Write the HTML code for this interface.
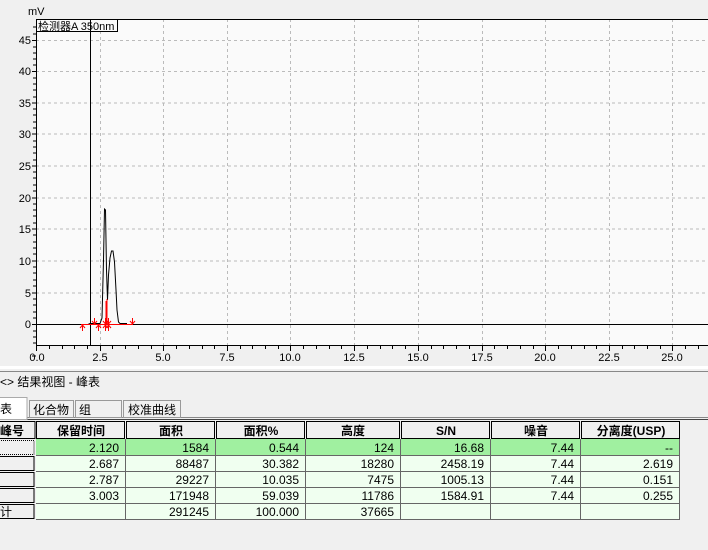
<!DOCTYPE html>
<html><head><meta charset="utf-8"><style>
html,body{margin:0;padding:0;background:#f0f0f0;width:708px;height:550px;overflow:hidden}
svg text{font-family:"Liberation Sans","Noto Sans CJK SC",sans-serif}
.m{font-family:"Liberation Mono","Noto Sans CJK SC",monospace;font-size:12px}
</style></head><body>
<svg width="708" height="550" xmlns="http://www.w3.org/2000/svg">
<rect x="0" y="0" width="708" height="550" fill="#f0f0f0"/>
<rect x="36" y="19" width="672" height="326" fill="#fafafa"/>
<g stroke="#bbb" stroke-dasharray="3,3" stroke-width="1">
<line x1="36" x2="708" y1="40.5" y2="40.5"/><line x1="36" x2="708" y1="71.5" y2="71.5"/>
<line x1="36" x2="708" y1="103" y2="103"/><line x1="36" x2="708" y1="134" y2="134"/>
<line x1="36" x2="708" y1="166" y2="166"/><line x1="36" x2="708" y1="198" y2="198"/>
<line x1="36" x2="708" y1="229" y2="229"/><line x1="36" x2="708" y1="261" y2="261"/>
<line x1="36" x2="708" y1="293" y2="293"/>
<line y1="19" y2="345" x1="100.5" x2="100.5"/><line y1="19" y2="345" x1="163.5" x2="163.5"/>
<line y1="19" y2="345" x1="227.5" x2="227.5"/><line y1="19" y2="345" x1="290.5" x2="290.5"/>
<line y1="19" y2="345" x1="354.5" x2="354.5"/><line y1="19" y2="345" x1="418.5" x2="418.5"/>
<line y1="19" y2="345" x1="482.5" x2="482.5"/><line y1="19" y2="345" x1="545.5" x2="545.5"/>
<line y1="19" y2="345" x1="609.5" x2="609.5"/><line y1="19" y2="345" x1="672.5" x2="672.5"/>
</g>
<g stroke="#000" stroke-width="1" fill="none">
<line x1="36" x2="708" y1="19.5" y2="19.5"/>
<line x1="36" x2="708" y1="345.5" y2="345.5"/>
<line x1="36.5" x2="36.5" y1="19" y2="346"/>
<line x1="90.5" x2="90.5" y1="19" y2="346"/>
<line x1="36" x2="708" y1="324.5" y2="324.5"/>
<path d="M36 324.5 L88 324.5 L90 323.5 L100 323.5 L102 318 L103.5 260 L104.5 209 L105.5 210 L106.5 270 L107.5 300 L108.5 275 L110 258 L111.5 251 L113 251 L114.5 262 L116 290 L117 310 L118.5 322 L120 323.5 L127 323.5"/>
</g>
<g stroke="#000">
<path d="M32 40.5h4M32 71.5h4M32 103h4M32 134h4M32 166h4M32 198h4M32 229h4M32 261h4M32 293h4M32 324.5h4M32 356h4"/>
<path d="M33 27h3M33 34h3M33 47h3M33 53h3M33 59h3M33 65h3M33 78h3M33 84h3M33 90h3M33 97h3M33 109h3M33 115h3M33 122h3M33 128h3M33 141h3M33 147h3M33 153h3M33 160h3M33 172h3M33 178h3M33 185h3M33 191h3M33 204h3M33 210h3M33 216h3M33 223h3M33 235h3M33 242h3M33 248h3M33 254h3M33 267h3M33 273h3M33 280h3M33 286h3M33 299h3M33 305h3M33 312h3M33 318h3M33 331h3M33 337h3M33 343h3"/>
</g>
<g stroke="#000" id="xt"></g>
<path stroke="#000" d="M36.5 346v5M49.5 346v3M62.5 346v3M74.5 346v3M87.5 346v3M100.5 346v5M112.5 346v3M125.5 346v3M138.5 346v3M151.5 346v3M163.5 346v5M176.5 346v3M189.5 346v3M202.5 346v3M214.5 346v3M227.5 346v5M240.5 346v3M252.5 346v3M265.5 346v3M278.5 346v3M290.5 346v5M303.5 346v3M316.5 346v3M329.5 346v3M341.5 346v3M354.5 346v5M367.5 346v3M380.5 346v3M392.5 346v3M405.5 346v3M418.5 346v5M431.5 346v3M443.5 346v3M456.5 346v3M469.5 346v3M482.5 346v5M494.5 346v3M507.5 346v3M520.5 346v3M533.5 346v3M545.5 346v5M558.5 346v3M571.5 346v3M584.5 346v3M596.5 346v3M609.5 346v5M622.5 346v3M634.5 346v3M647.5 346v3M660.5 346v3M672.5 346v5M685.5 346v3M698.5 346v3"/>
<g stroke="#f00" fill="none" stroke-width="1">
<path d="M81 324.5H133"/>
<path d="M107 324V299M106 324V301"/>
<path d="M82.5 331v-6M80 328l2.5-3 2.5 3"/>
<path d="M94.5 318v6M92 321l2.5 3 2.5-3"/>
<path d="M98.5 331v-6M96 328l2.5-3 2.5 3"/>
<path d="M105.5 331v-6M103 328l2.5-3 2.5 3"/>
<path d="M108.5 331v-6M106 328l2.5-3 2.5 3"/>
<path d="M105.5 318v6M103 321l2.5 3 2.5-3"/>
<path d="M108.5 318v6M106 321l2.5 3 2.5-3"/>
<path d="M132.5 318v6M130 321l2.5 3 2.5-3"/>
</g>
<g font-size="11" fill="#000" text-anchor="end">
<text x="31" y="44">45</text><text x="31" y="75">40</text><text x="31" y="107">35</text>
<text x="31" y="138">30</text><text x="31" y="170">25</text><text x="31" y="202">20</text>
<text x="31" y="233">15</text><text x="31" y="265">10</text><text x="31" y="297">5</text>
<text x="31" y="328">0</text>
</g>
<text x="28" y="15" font-size="11">mV</text>
<g font-size="11" fill="#000" text-anchor="middle">
<text x="37" y="361">0.0</text><text x="100" y="361">2.5</text><text x="163" y="361">5.0</text>
<text x="227" y="361">7.5</text><text x="290" y="361">10.0</text><text x="354" y="361">12.5</text>
<text x="418" y="361">15.0</text><text x="482" y="361">17.5</text><text x="545" y="361">20.0</text>
<text x="609" y="361">22.5</text><text x="672" y="361">25.0</text>
</g>
<rect x="36.5" y="19.5" width="81" height="12" fill="#fafafa" stroke="#000"/>
<text x="38" y="30" font-size="11">检测器A 350nm</text>
<line x1="90.5" x2="90.5" y1="19" y2="32" stroke="#000"/>
<rect x="0" y="366" width="708" height="3" fill="#fff"/>
<line x1="0" x2="708" y1="371.5" y2="371.5" stroke="#888"/>
<text x="0" y="386" font-size="12">&lt;&gt;  结果视图 -   峰表</text>
<line x1="0" x2="708" y1="417.5" y2="417.5" stroke="#888"/>
<line x1="0" x2="708" y1="419.5" y2="419.5" stroke="#444"/>
<rect x="-1" y="397.5" width="28" height="22" fill="#fff" stroke="#aaa"/>
<rect x="29.5" y="400.5" width="44" height="17" fill="#f0f0f0" stroke="#999"/>
<rect x="75.5" y="400.5" width="46" height="17" fill="#f0f0f0" stroke="#999"/>
<rect x="123.5" y="400.5" width="57" height="17" fill="#f0f0f0" stroke="#999"/>
<g font-size="12"><text x="0" y="413">表</text><text x="33" y="414">化合物</text><text x="79" y="414">组</text><text x="128" y="414">校准曲线</text></g>
<rect x="36" y="439" width="644" height="17" fill="#a0f0a0"/>
<rect x="36" y="456" width="644" height="64" fill="#f0fff0"/>
<g stroke="#666" fill="none">
<path d="M36 455.5H680M36 471.5H680M36 487.5H680M36 503.5H680M36 519.5H680"/>
<path d="M125.5 439V520M215.5 439V520M305.5 439V520M400.5 439V520M490.5 439V520M580.5 439V520M679.5 439V520"/>
</g>
<g fill="#f0f0f0" stroke="#000">
<rect x="-1" y="421.5" width="36" height="17"/><rect x="36.5" y="421.5" width="88" height="17"/>
<rect x="126.5" y="421.5" width="88" height="17"/><rect x="216.5" y="421.5" width="88" height="17"/>
<rect x="306.5" y="421.5" width="93" height="17"/><rect x="401.5" y="421.5" width="88" height="17"/>
<rect x="491.5" y="421.5" width="88" height="17"/><rect x="581.5" y="421.5" width="98" height="17"/>
<rect x="-1" y="440.5" width="35" height="14" stroke-dasharray="1,1"/>
<rect x="-1" y="456.5" width="35" height="14"/><rect x="-1" y="472.5" width="35" height="14"/>
<rect x="-1" y="488.5" width="35" height="14"/><rect x="-1" y="504.5" width="35" height="14"/>
</g>
<g font-size="12" font-weight="bold" text-anchor="middle">
<text x="12" y="435">峰号</text><text x="81" y="435">保留时间</text><text x="171" y="435">面积</text>
<text x="261" y="435">面积%</text><text x="353" y="435">高度</text><text x="446" y="435">S/N</text>
<text x="536" y="435">噪音</text><text x="631" y="435">分离度(USP)</text>
</g>
<text x="0" y="516" font-size="12">计</text>
<g class="m" text-anchor="end">
<text x="119" y="452">2.120</text><text x="209" y="452">1584</text><text x="299" y="452">0.544</text><text x="394" y="452">124</text><text x="484" y="452">16.68</text><text x="574" y="452">7.44</text><text x="673" y="452">--</text>
<text x="119" y="468">2.687</text><text x="209" y="468">88487</text><text x="299" y="468">30.382</text><text x="394" y="468">18280</text><text x="484" y="468">2458.19</text><text x="574" y="468">7.44</text><text x="673" y="468">2.619</text>
<text x="119" y="484">2.787</text><text x="209" y="484">29227</text><text x="299" y="484">10.035</text><text x="394" y="484">7475</text><text x="484" y="484">1005.13</text><text x="574" y="484">7.44</text><text x="673" y="484">0.151</text>
<text x="119" y="500">3.003</text><text x="209" y="500">171948</text><text x="299" y="500">59.039</text><text x="394" y="500">11786</text><text x="484" y="500">1584.91</text><text x="574" y="500">7.44</text><text x="673" y="500">0.255</text>
<text x="209" y="516">291245</text><text x="299" y="516">100.000</text><text x="394" y="516">37665</text>
</g>
</svg>
</body></html>
